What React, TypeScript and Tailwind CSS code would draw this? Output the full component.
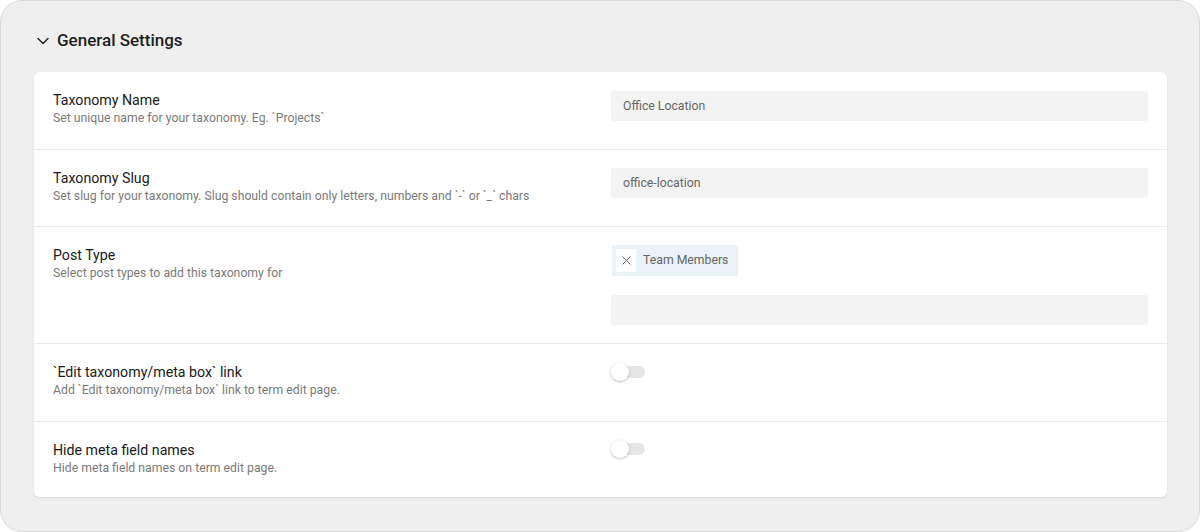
import { ChevronDown, X } from 'lucide-react';

const font = { fontFamily: 'Roboto, "Noto Sans", sans-serif' };

function Label({ title, desc }: { title: string; desc: string }) {
  return (
    <div className="flex-1 min-w-0 pt-[18px]">
      <div className="text-[14.2px] leading-[20px] text-[#1a1a1a]">{title}</div>
      <div className="text-[12.25px] leading-[16px] text-[#7a7a7a]">{desc}</div>
    </div>
  );
}

function TextInput({ value }: { value?: string }) {
  return (
    <div className="h-[30px] w-full rounded-[3px] bg-[#f3f3f3] px-3 flex items-center text-[12.25px] text-[#666]">
      {value}
    </div>
  );
}

function Toggle() {
  return (
    <div className="relative h-[20px] w-[36px] flex items-center">
      <div className="ml-[8px] h-[12px] w-[26px] rounded-full bg-[#e6e6e6]" />
      <div className="absolute left-0 top-[1px] h-[18px] w-[18px] rounded-full bg-white shadow-[0_1px_3px_rgba(0,0,0,0.25)]" />
    </div>
  );
}

export default function App() {
  return (
    <div className="w-[1200px] h-[532px] bg-white" style={font}>
      <div className="h-full w-full rounded-[22px] border border-[#d9d9d9] bg-[#efefef] pl-[33px] pr-[32px] pt-[29px]">
        <div className="flex items-center gap-[4px] h-[22px]">
          <ChevronDown size={20} strokeWidth={1.75} className="text-[#222] -ml-[1px]" />
          <span className="text-[17px] font-medium text-[#1e1e1e]">General Settings</span>
        </div>
        <div className="mt-[20px] rounded-[6px] bg-white shadow-[0_1px_2px_rgba(0,0,0,0.08)]">
          <div className="flex h-[78px] px-[19px] border-b border-[#ececec]">
            <Label title="Taxonomy Name" desc="Set unique name for your taxonomy. Eg. `Projects`" />
            <div className="w-[537px] pt-[19px]">
              <TextInput value="Office Location" />
            </div>
          </div>
          <div className="flex h-[77px] px-[19px] border-b border-[#ececec]">
            <Label
              title="Taxonomy Slug"
              desc="Set slug for your taxonomy. Slug should contain only letters, numbers and `-` or `_` chars"
            />
            <div className="w-[537px] pt-[18px]">
              <TextInput value="office-location" />
            </div>
          </div>
          <div className="flex h-[117px] px-[19px] border-b border-[#ececec]">
            <Label title="Post Type" desc="Select post types to add this taxonomy for" />
            <div className="w-[537px] pt-[18px] flex flex-col items-start gap-[19px]">
              <div className="ml-[1px] h-[31px] flex items-center gap-[7px] bg-[#e9f3f8] pl-[4px] pr-[10px]">
                <div className="h-[23px] w-[20px] bg-white flex items-center justify-center">
                  <X size={15} strokeWidth={1.5} className="text-[#555]" />
                </div>
                <span className="text-[12.25px] text-[#666]">Team Members</span>
              </div>
              <TextInput />
            </div>
          </div>
          <div className="flex h-[78px] px-[19px] border-b border-[#ececec]">
            <Label
              title="`Edit taxonomy/meta box` link"
              desc="Add `Edit taxonomy/meta box` link to term edit page."
            />
            <div className="w-[537px] pt-[18px]">
              <Toggle />
            </div>
          </div>
          <div className="flex h-[75px] px-[19px]">
            <Label title="Hide meta field names" desc="Hide meta field names on term edit page." />
            <div className="w-[537px] pt-[17px]">
              <Toggle />
            </div>
          </div>
        </div>
      </div>
    </div>
  );
}
